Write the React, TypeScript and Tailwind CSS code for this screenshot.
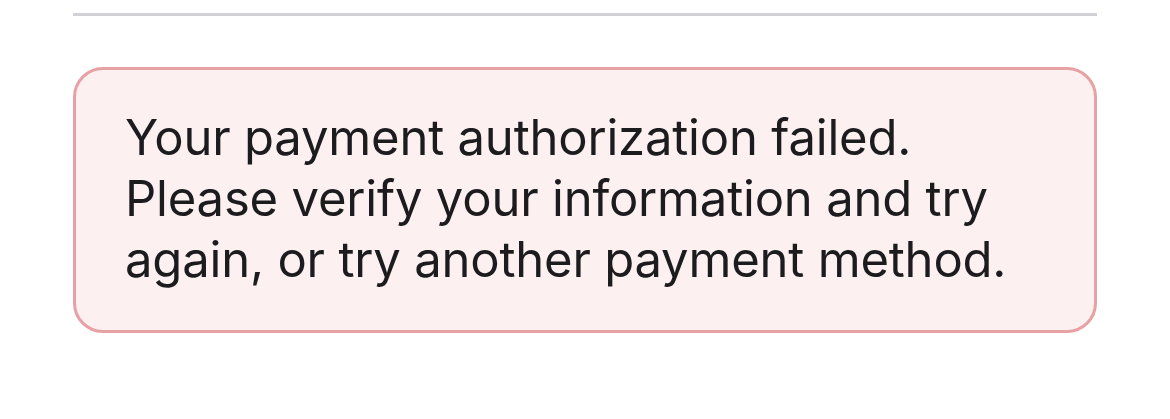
export default function App() {
  return (
    <div className="w-[1170px] h-[419px] bg-white pt-[13px]" style={{ fontFamily: 'Inter, "Noto Sans", sans-serif' }}>
      <div className="mx-[73px] h-[3px] bg-[#d1d1d6]" />
      <div className="mx-[73px] mt-[51px] rounded-[30px] border-[3px] border-[#e7a1a5] bg-[#fdf0f1] px-[49px] pt-[37px] pb-[40px]">
        <p className="text-[49px] leading-[61px] text-[#1c1c1e] tracking-[-0.2px]">
          Your payment authorization failed.<br />
          Please verify your information and try<br />
          again, or try another payment method.
        </p>
      </div>
    </div>
  );
}
